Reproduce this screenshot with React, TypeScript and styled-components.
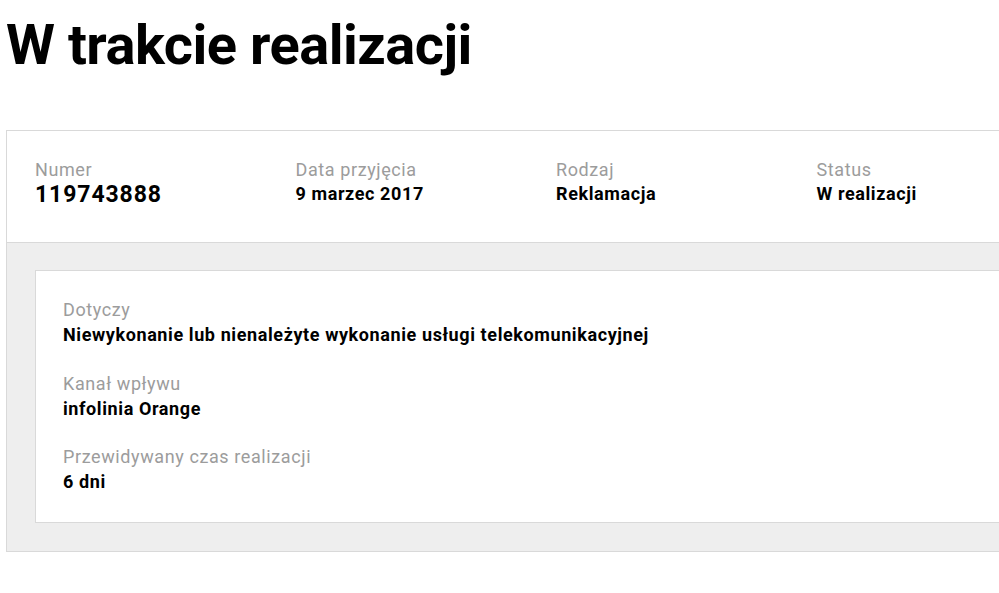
import React from 'react';
import styled, { createGlobalStyle } from 'styled-components';

const GlobalStyles = createGlobalStyle`
  html, body {
    margin: 0;
    padding: 0;
    background: #fff;
    overflow: hidden;
  }
  body {
    font-family: Roboto, "Liberation Sans", sans-serif;
    color: #000;
  }
`;

const Page = styled.div`
  padding: 10px 0 0 6px;
`;

const Title = styled.h1`
  margin: 0 0 50px;
  font-size: 56px;
  line-height: 70px;
  letter-spacing: -0.5px;
  font-weight: 700;
`;

const Panel = styled.section`
  width: 1080px;
  border: 1px solid #d9d9d9;
  background: #eeeeee;
`;

const Summary = styled.div`
  display: grid;
  grid-template-columns: repeat(4, 260.5px);
  box-sizing: border-box;
  height: 112px;
  padding: 28px 28px 0;
  background: #fff;
  border-bottom: 1px solid #d9d9d9;
`;

const Field = styled.div`
  display: flex;
  flex-direction: column;
`;

const Label = styled.span`
  font-size: 18px;
  line-height: 22px;
  letter-spacing: 0.6px;
  color: #9c9c9c;
`;

const Value = styled.span<{ $large?: boolean }>`
  font-size: ${(p) => (p.$large ? '23px' : '18px')};
  line-height: ${(p) => (p.$large ? '28px' : '26px')};
  letter-spacing: ${(p) => (p.$large ? '0.9px' : '0.6px')};
  font-weight: 700;
`;

const Body = styled.div`
  padding: 27px 0 28px 28px;
`;

const Card = styled.div`
  display: flex;
  flex-direction: column;
  gap: 23.5px;
  padding: 28px 27px 26px;
  background: #fff;
  border: 1px solid #d9d9d9;
`;

const DetailValue = styled.span`
  font-size: 18px;
  line-height: 28px;
  letter-spacing: 0.6px;
  font-weight: 700;
`;

const summary = [
  { label: 'Numer', value: '119743888', large: true },
  { label: 'Data przyjęcia', value: '9 marzec 2017' },
  { label: 'Rodzaj', value: 'Reklamacja' },
  { label: 'Status', value: 'W realizacji' },
];

const details = [
  { label: 'Dotyczy', value: 'Niewykonanie lub nienależyte wykonanie usługi telekomunikacyjnej' },
  { label: 'Kanał wpływu', value: 'infolinia Orange' },
  { label: 'Przewidywany czas realizacji', value: '6 dni' },
];

export default function App() {
  return (
    <Page>
      <GlobalStyles />
      <Title>W trakcie realizacji</Title>
      <Panel>
        <Summary>
          {summary.map((f) => (
            <Field key={f.label}>
              <Label>{f.label}</Label>
              <Value $large={f.large}>{f.value}</Value>
            </Field>
          ))}
        </Summary>
        <Body>
          <Card>
            {details.map((d) => (
              <Field key={d.label}>
                <Label>{d.label}</Label>
                <DetailValue>{d.value}</DetailValue>
              </Field>
            ))}
          </Card>
        </Body>
      </Panel>
    </Page>
  );
}
